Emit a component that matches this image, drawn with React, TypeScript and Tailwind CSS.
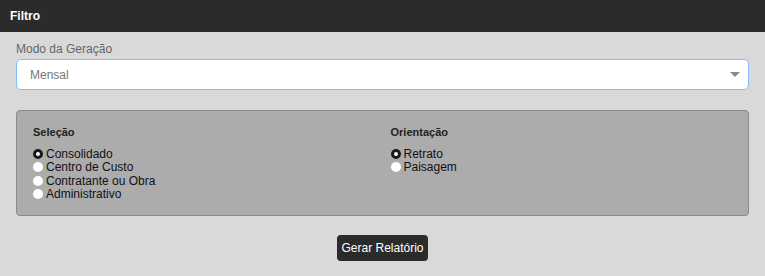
const selecao = ["Consolidado", "Centro de Custo", "Contratante ou Obra", "Administrativo"];
const orientacao = ["Retrato", "Paisagem"];

function Radio({ label, checked }: { label: string; checked?: boolean }) {
  return (
    <label className="flex h-[13.5px] items-center gap-[3px] text-[12px] leading-none text-[#111]">
      <span
        className={
          checked
            ? "h-[10px] w-[10px] rounded-full border-[3px] border-[#1a1a1a] bg-white"
            : "h-[10px] w-[10px] rounded-full bg-white"
        }
      />
      <span>{label}</span>
    </label>
  );
}

function Group({ title, items }: { title: string; items: string[] }) {
  return (
    <div className="flex flex-col">
      <p className="mb-[7px] text-[11px] leading-4 font-bold text-[#222]">{title}</p>
      {items.map((item, i) => (
        <Radio key={item} label={item} checked={i === 0} />
      ))}
    </div>
  );
}

export default function App() {
  return (
    <div className="h-[276px] w-[765px] bg-[#d9d9d9] font-['Liberation_Sans',Arial,sans-serif]">
      <div className="flex h-8 items-center bg-[#2b2b2b] px-[10px]">
        <h1 className="text-[12px] font-bold text-white">Filtro</h1>
      </div>

      <div className="px-4 pt-[10px]">
        <p className="mb-[2px] text-[12px] leading-[15px] text-[#666]">Modo da Geração</p>
        <div className="flex h-[31px] items-center justify-between rounded-[5px] border border-[#80bdff] bg-white pl-[13px] pr-[8px]">
          <span className="text-[12px] text-[#777]">Mensal</span>
          <svg width="10" height="6" viewBox="0 0 10 6">
            <path d="M0 0h10L5 5z" fill="#888" />
          </svg>
        </div>

        <div className="mt-[20px] grid h-[106px] grid-cols-2 rounded-[4px] border border-[#8a8a8a] bg-[#acacac] px-4 pt-[13px]">
          <Group title="Seleção" items={selecao} />
          <div className="pl-[8px]">
            <Group title="Orientação" items={orientacao} />
          </div>
        </div>

        <div className="mt-[19px] flex justify-center">
          <button className="h-[26px] w-[91px] rounded-[4px] bg-[#2b2b2b] text-[12px] font-medium text-white">
            Gerar Relatório
          </button>
        </div>
      </div>
    </div>
  );
}
